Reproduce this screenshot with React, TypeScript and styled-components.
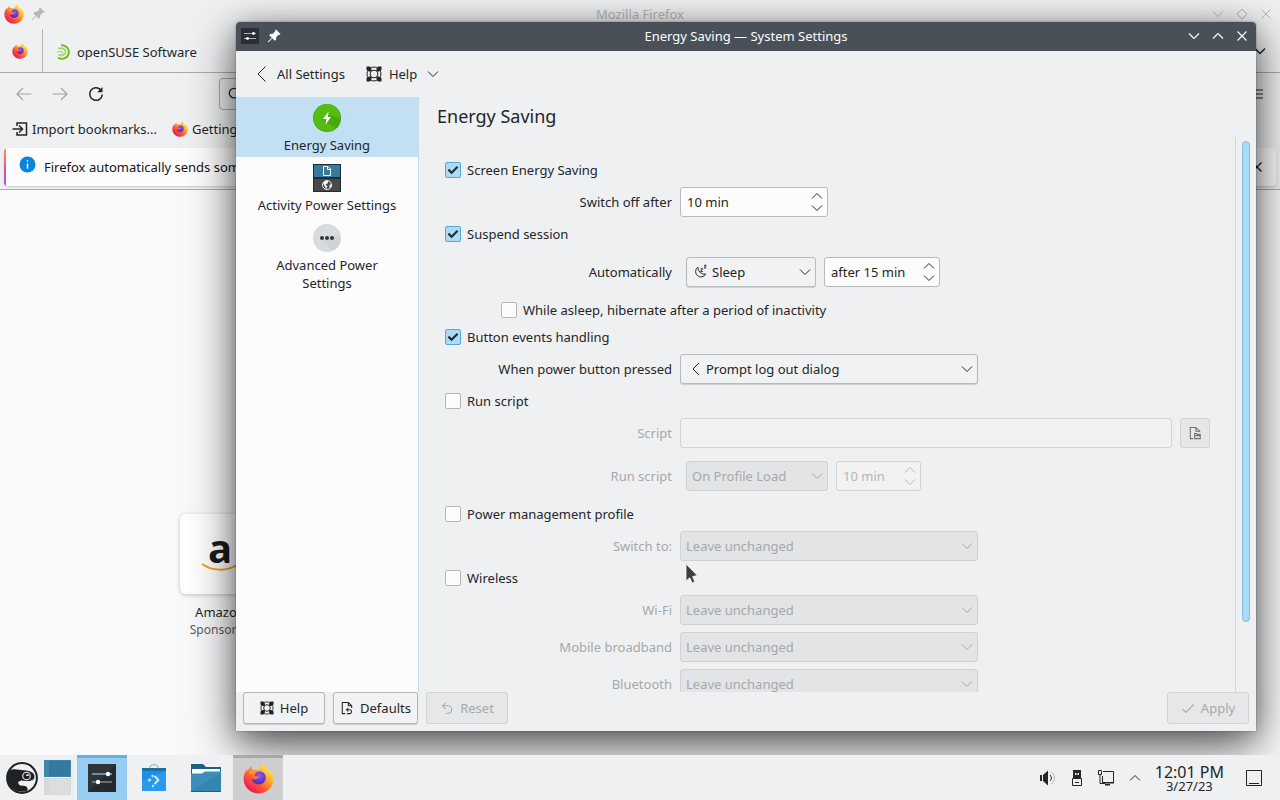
import React, { useId, useState } from "react";
import styled, { createGlobalStyle, css } from "styled-components";

const GlobalStyle = createGlobalStyle`
  *, *::before, *::after { box-sizing: border-box; }
  body {
    margin: 0;
    font-family: "Noto Sans", "Liberation Sans", sans-serif;
    font-size: 13px;
    line-height: 18px;
    color: #232629;
    background: #f9f9fb;
  }
  button, input, select { font: inherit; color: inherit; }
  button { margin: 0; padding: 0; border: 0; background: none; cursor: pointer; }
  a { color: inherit; text-decoration: none; }
  svg { display: block; flex: none; }
`;

/* ---------- icons ---------- */

type LineIconProps = { size?: number; box?: number; width?: number; children: React.ReactNode };

const LineIcon = ({ size = 16, box = 16, width = 1, children }: LineIconProps) => (
  <svg
    width={size}
    height={size}
    viewBox={`0 0 ${box} ${box}`}
    fill="none"
    stroke="currentColor"
    strokeWidth={width}
    aria-hidden="true"
  >
    {children}
  </svg>
);

const ChevronDown = ({ width = 1 }: { width?: number }) => (
  <LineIcon size={12} box={12} width={width}><path d="M1 3.5 6 8.5 11 3.5" /></LineIcon>
);
const ChevronUp = ({ width = 1 }: { width?: number }) => (
  <LineIcon size={12} box={12} width={width}><path d="M1 8.5 6 3.5 11 8.5" /></LineIcon>
);
const CloseIcon = ({ width = 1 }: { width?: number }) => (
  <LineIcon size={12} box={12} width={width}><path d="M1.5 1.5 10.5 10.5M10.5 1.5 1.5 10.5" /></LineIcon>
);
const DiamondIcon = () => (
  <LineIcon size={12} box={12}><path d="M6 1 11 6 6 11 1 6Z" /></LineIcon>
);
const ChevronLeft = () => (
  <LineIcon><path d="M11.5 .5 4 8 11.5 15.5" /></LineIcon>
);
const LogoutIcon = () => (
  <LineIcon><path d="M11 2 5 8 11 14" /></LineIcon>
);

const PinIcon = () => (
  <svg width="14" height="14" viewBox="0 0 14 14" fill="currentColor" aria-hidden="true">
    <path d="M9 .5 13.500 5 12.500 6 11.400 5.800 9.200 8.200 9 10.800 7.800 11.800 5.300 9.200 1.600 13.200 .8 12.400 4.800 8.700 2.200 6.200 3.200 5 5.800 4.800 8.200 2.600 8 1.500Z" />
  </svg>
);

const LifebuoyIcon = ({ size = 16 }: { size?: number }) => (
  <LineIcon size={size}>
    <circle cx="8" cy="8" r="7" strokeWidth="1" />
    <circle cx="8" cy="8" r="3.800" strokeWidth="1.100" />
    <path d="M.5 .5H4L5.600 2.800V5.600H2.800L.5 4ZM15.500 .5V4L13.200 5.600H10.400V2.800L12 .5ZM.5 15.500V12L2.800 10.400H5.600V13.200L4 15.500ZM15.500 15.500H12L10.400 13.200V10.400H13.200L15.500 12Z" fill="currentColor" stroke="none" />
  </LineIcon>
);

const DefaultsIcon = () => (
  <LineIcon size={14} width={1.2}>
    <path d="M6 14.400H2.600V1.600H9.500L13.400 5.500V8M9.500 1.600V5.500H13.400" />
    <path d="M7.500 10H11A2.200 2.200 0 0 1 11 14.400H8M9.500 8 7.500 10 9.500 12" />
  </LineIcon>
);

const ResetIcon = () => (
  <LineIcon size={14} width={1.2}>
    <path d="M3 5.500H9A4.400 4.400 0 0 1 9 14.300H7M6.500 2 3 5.500 6.500 9" />
  </LineIcon>
);

const ApplyIcon = () => (
  <LineIcon size={14} width={1.3}><path d="M1.500 9 5.500 13 14.500 4" /></LineIcon>
);

const OpenFileIcon = () => (
  <LineIcon size={14} width={1.2}>
    <path d="M6 14.400H2.600V1.600H9L13.400 6V7M9 1.600V6H13.400" />
    <path d="M7.600 14.400V8.600H10L11 9.600H14V14.400ZM7.600 11H14" />
  </LineIcon>
);

const SleepIcon = () => (
  <LineIcon size={14} width={1.1}>
    <path d="M4.500 3.500A6.200 6.200 0 1 0 13.500 11.500 7.500 7.500 0 0 1 4.500 3.500Z" />
    <path d="M7.500 5.500H10L7.500 8.500H10M11.500 1.500H14L11.500 4.500H14" />
  </LineIcon>
);

const TickIcon = () => (
  <svg width="16" height="16" viewBox="0 0 16 16" fill="none" stroke="#16303f" strokeWidth="2.200" aria-hidden="true">
    <path d="M3.400 7.600 6.600 10.800 12.600 4.800" />
  </svg>
);

const FirefoxLogo = ({ size }: { size: number }) => {
  const id = useId();
  return (
    <svg width={size} height={size} viewBox="0 0 32 32" aria-hidden="true">
      <defs>
        <linearGradient id={`${id}a`} x1="27" y1="4" x2="6" y2="28" gradientUnits="userSpaceOnUse">
          <stop offset="0" stopColor="#fff04a" />
          <stop offset=".35" stopColor="#ffa42e" />
          <stop offset=".65" stopColor="#ff5a35" />
          <stop offset="1" stopColor="#e8175e" />
        </linearGradient>
        <radialGradient id={`${id}b`} cx="17" cy="13" r="8" gradientUnits="userSpaceOnUse">
          <stop offset="0" stopColor="#8a5cf5" />
          <stop offset="1" stopColor="#5b2bc0" />
        </radialGradient>
      </defs>
      <path
        d="M20 .5C22.500 3 24 4.500 24.600 6.600 27 7.600 28.500 9.500 29.200 11 29 9.500 28.500 8.500 28 7.600 30.800 10.500 31.600 14 31.400 17 31 25.500 24.200 31.400 16 31.400 7.500 31.400 .6 24.800 .6 16.300 .6 12.300 2.200 9 4.400 6.500 4.400 7.300 4.500 8 4.700 8.600 5.500 6.500 7.300 4.200 9 3.200 8.800 5 9.200 6.200 10 7.200 12.500 6.600 14.500 6.600 16.500 7.600 17.600 5.200 18.200 2.500 20 .5Z"
        fill={`url(#${id}a)`}
      />
      <path
        d="M16.500 8.500C21 8.500 23.400 11.600 23.400 15.300 23.400 19.600 20 22.200 16.400 22.200 12.500 22.200 9.300 19.600 9.300 16 10.500 17.200 12 17.300 13.400 16.700 15.200 15.600 16.200 15.300 17.200 14.900 16 13.600 13.500 13.600 12.300 13.300 12.200 11 13.500 9.300 16.500 8.500Z"
        fill={`url(#${id}b)`}
      />
      <path d="M10 7.200C7.800 8 6.800 9.500 6.500 11.500 8 10.600 9.800 10.500 11.200 11.200 12.200 9.800 13.500 9 15.500 8.500 13.500 7.300 11.600 6.900 10 7.200Z" fill="#ff9433" />
    </svg>
  );
};

const OpenSuseSwirl = () => (
  <svg width="16" height="16" viewBox="0 0 16 16" fill="none" aria-hidden="true">
    <path d="M5 1.300A6.800 6.800 0 1 1 2 13.500" stroke="#73ba25" strokeWidth="2" />
    <path d="M2 4.500C6 3.500 10 5 9.500 8.500 9 11.500 5 12 2.500 10.500" stroke="#a5d56a" strokeWidth="1.600" />
    <path d="M1 8C4 7 6.500 7.500 7 9.500" stroke="#a5d56a" strokeWidth="1.200" />
  </svg>
);

const SettingsAppIcon = ({ size }: { size: number }) => (
  <svg width={size} height={size} viewBox="0 0 28 28" aria-hidden="true">
    <rect width="28" height="28" fill="#30353a" />
    <path d="M0 28 28 0V28Z" fill="#262a2e" />
    <path d="M4 10H24" stroke="#7cc4e0" strokeWidth="1.300" />
    <path d="M4 18H24" stroke="#8d959b" strokeWidth="1.300" />
    <circle cx="20" cy="10" r="2.200" fill="#fff" />
    <circle cx="10" cy="18" r="2.200" fill="#fff" />
  </svg>
);

const TitleSettingsIcon = () => (
  <svg width="18" height="16" viewBox="0 0 18 16" aria-hidden="true">
    <rect width="18" height="16" fill="#2a2f34" />
    <path d="M3 5.500H15" stroke="#5fd3c0" />
    <path d="M3 10.500H15" stroke="#c3a9d6" />
    <circle cx="12.500" cy="5.500" r="1.400" fill="#fff" />
    <circle cx="6.500" cy="10.500" r="1.400" fill="#fff" />
  </svg>
);

const EnergyIcon = () => (
  <svg width="28" height="28" viewBox="0 0 28 28" aria-hidden="true">
    <circle cx="14" cy="14" r="14" fill="#48a80c" />
    <circle cx="14" cy="13.500" r="13.500" fill="#55bd0f" />
    <path d="M10 17 24 24A14 14 0 0 0 28 14L17 11Z" fill="#46a30b" opacity=".7" />
    <path d="M15.500 7.500 10 15H13.300L12.600 20.500 18 13H14.800Z" fill="#fff" />
  </svg>
);

const ActivityIcon = () => (
  <svg width="28" height="28" viewBox="0 0 28 28" aria-hidden="true">
    <rect width="28" height="28" fill="#1d2c38" />
    <rect x="1" y="1" width="26" height="12" fill="#357b9e" />
    <rect x="1" y="15" width="26" height="12" fill="#48494d" />
    <path d="M10.500 2.500H15L17.500 5V11.500H10.500ZM14.500 2.500V5.500H17.500" fill="none" stroke="#fff" />
    <circle cx="14" cy="21" r="4.500" fill="none" stroke="#f4f4f4" />
    <path d="M10 19 12 17H15.500L14.500 19.500 12.500 20.500 14.500 22.500 13 25 12 22.500ZM16.500 21 18.500 20V22.500L16.500 24.500Z" fill="#f4f4f4" />
  </svg>
);

const MoreIcon = () => (
  <svg width="28" height="28" viewBox="0 0 28 28" aria-hidden="true">
    <circle cx="14" cy="14" r="14" fill="#d7dade" />
    <path d="M10 18 20 26.500A14 14 0 0 0 28 14L20 12Z" fill="#c9cdd1" opacity=".6" />
    <circle cx="9" cy="14" r="2" fill="#2f3439" />
    <circle cx="14" cy="14" r="2" fill="#2f3439" />
    <circle cx="19" cy="14" r="2" fill="#2f3439" />
  </svg>
);

const GeckoIcon = () => (
  <svg width="32" height="32" viewBox="0 0 32 32" aria-hidden="true">
    <circle cx="16" cy="16" r="14.900" fill="#eff0f1" stroke="#1f2225" strokeWidth="2" />
    <path d="M2.500 9C7 5.500 13 8 18 8.200 21 8.200 25 9 27.500 11.500 29 14 28.500 16.500 27 18.500 22 20 16 17.500 12.500 19.500 11.500 22.500 14 24 18 23.800 20.500 24 22 25.500 21.500 28.500 14 31.500 6 28.500 3 22 1 17.500 1 13 2.500 9Z" fill="#1f2225" />
    <circle cx="20.500" cy="14" r="4.300" fill="#eff0f1" />
    <circle cx="20.500" cy="14" r="3.200" fill="#1f2225" />
    <ellipse cx="21.500" cy="13.200" rx="1.400" ry=".9" fill="#eff0f1" />
    <path d="M15 18.800C20 20.500 24 20.300 27.500 17.500" stroke="#eff0f1" fill="none" />
  </svg>
);

const StoreIcon = () => (
  <svg width="26" height="30" viewBox="0 0 26 30" aria-hidden="true">
    <path d="M8.500 8V6A4.500 4.500 0 0 1 17.500 6V8" fill="none" stroke="#a9bfcb" strokeWidth="1.500" />
    <rect x="1" y="5" width="24" height="4" fill="#1d6f9e" />
    <path d="M1 8H25V27A1 1 0 0 1 24 28H2A1 1 0 0 1 1 27Z" fill="#1f8fe6" />
    <path d="M1 18 25 8V27A1 1 0 0 1 24 28H2Z" fill="#35a5f5" opacity=".5" />
    <path d="M13.500 13 17.500 17 13.500 21" fill="none" stroke="#d8f1ff" strokeWidth="1.800" />
    <circle cx="8.500" cy="17" r="1.600" fill="#bfe6ff" />
    <circle cx="11.500" cy="13" r="1.200" fill="#bfe6ff" />
    <circle cx="12" cy="23" r="1.200" fill="#bfe6ff" />
  </svg>
);

const FolderIcon = () => (
  <svg width="30" height="28" viewBox="0 0 30 28" aria-hidden="true">
    <path d="M0 0H12L15 3H30V14H0Z" fill="#1f5f80" />
    <rect x="1" y="5" width="28" height="8" fill="#fff" />
    <path d="M0 9.500H11L14 7.500H30V28H0Z" fill="#3c8fb8" />
    <path d="M0 28 30 9V28Z" fill="#2f7fa8" opacity=".6" />
    <rect y="27" width="30" height="1" fill="#20607f" />
  </svg>
);

const VolumeIcon = () => (
  <svg width="18" height="18" viewBox="0 0 18 18" aria-hidden="true">
    <path d="M1 6H3V12H1ZM4 6 9 1.500V16.500L4 12Z" fill="#232629" />
    <path d="M11 6A4 4 0 0 1 11 12" fill="none" stroke="#232629" />
    <path d="M12.500 3A7.500 7.500 0 0 1 12.500 15" fill="none" stroke="#b3b6b9" />
  </svg>
);

const UsbIcon = () => (
  <svg width="12" height="18" viewBox="0 0 12 18" aria-hidden="true">
    <path d="M2 1H10V9H2Z" fill="#232629" />
    <path d="M4 4H5.500V6H4ZM6.500 4H8V6H6.500Z" fill="#eff0f1" />
    <path d="M1.500 9.500H10.500V16.500H1.500ZM4 13.500H8" fill="none" stroke="#232629" />
  </svg>
);

const NetworkIcon = () => (
  <svg width="18" height="18" viewBox="0 0 18 18" fill="none" stroke="#232629" aria-hidden="true">
    <path d="M6 2.500H16.500V13.500H5.500V7M1.500 1.500H4.500V5.500H1.500ZM3 5.500V14.500H8" />
    <path d="M5 13H17V14.500H5ZM8 15H13V16.500H8Z" fill="#232629" stroke="none" />
  </svg>
);

const ShowDesktopIcon = () => (
  <svg width="18" height="18" viewBox="0 0 18 18" fill="none" stroke="#232629" aria-hidden="true">
    <path d="M1.500 1.500H16.500V16.500H1.500ZM4 14.500H14" />
  </svg>
);

const PointerIcon = () => (
  <svg width="14" height="22" viewBox="0 0 14 22" aria-hidden="true">
    <path d="M1 1V18L4.800 14.800 7.200 20 9.800 18.700 7.600 13.600 12.300 12.500Z" fill="#3b3e42" stroke="#fafafa" strokeWidth=".8" />
  </svg>
);

/* ---------- desktop ---------- */

const Desktop = styled.div`
  display: flex;
  flex-direction: column;
  height: 100vh;
  min-height: 480px;
  overflow: hidden;
`;

const Workspace = styled.div`
  position: relative;
  flex: 1;
  min-height: 0;
  display: flex;
  overflow: hidden;
`;

const TitleBar = styled.header<{ $active?: boolean }>`
  display: grid;
  grid-template-columns: 1fr auto 1fr;
  align-items: center;
  flex: none;
  height: 29px;
  padding: 0 2px 2px;
  color: ${(p) => (p.$active ? "#fcfcfc" : "#b4b6b9")};
  background: ${(p) => (p.$active ? "#495057" : "transparent")};
`;

const TitleGroup = styled.div<{ $end?: boolean }>`
  display: flex;
  justify-content: ${(p) => (p.$end ? "flex-end" : "flex-start")};
`;

const TitleButton = styled.button`
  display: grid;
  place-items: center;
  width: 24px;
  height: 24px;
`;

/* ---------- Firefox ---------- */

const Browser = styled.section`
  flex: 1;
  display: flex;
  flex-direction: column;
  min-width: 0;
  background: #eff0f1;
`;

const TabStrip = styled.div`
  display: flex;
  align-items: stretch;
  height: 44px;
  padding-right: 8px;
  border-bottom: 1px solid #a9abad;
`;

const PinnedTab = styled.button`
  display: grid;
  place-items: center;
  width: 43px;
  padding-right: 2px;
  border-right: 1px solid #b5b7b9;
`;

const Tab = styled.button`
  display: flex;
  align-items: center;
  gap: 5px;
  padding: 2px 13px 0;
`;

const StripMenu = styled.button`
  display: grid;
  place-items: center;
  width: 24px;
  margin-left: auto;
`;

const NavBar = styled.div`
  display: flex;
  align-items: center;
  height: 42px;
  padding: 0 4px 0 6px;
`;

const NavButton = styled.button<{ $dim?: boolean }>`
  display: grid;
  place-items: center;
  width: 36px;
  height: 36px;
  color: ${(p) => (p.$dim ? "#a0a2a4" : "#232629")};
`;

const UrlBox = styled.label`
  display: flex;
  align-items: center;
  gap: 8px;
  flex: 1;
  height: 32px;
  margin: 0 190px 0 105px;
  padding: 0 8px;
  border: 1px solid #a9abad;
  border-radius: 4px;
`;

const UrlInput = styled.input`
  flex: 1;
  min-width: 0;
  border: 0;
  outline: 0;
  background: none;
`;

const Bookmarks = styled.nav`
  display: flex;
  align-items: center;
  gap: 15px;
  height: 31px;
  padding: 0 12px 3px;
`;

const Bookmark = styled.a`
  display: flex;
  align-items: center;
  gap: 4px;
  white-space: nowrap;
`;

const NoticeArea = styled.div`
  padding: 2px 4px 3px;
  border-bottom: 1px solid #a9abad;
`;

const Notice = styled.div`
  display: flex;
  align-items: center;
  gap: 8px;
  height: 38px;
  padding: 0 13px 0 15px;
  color: #15141a;
  background: linear-gradient(#ff9a4a, #f0508c 50%, #9059ff) left / 2px 100% no-repeat, #fcfcfc;
  border-radius: 4px;
  box-shadow: 0 1px 2px rgba(0, 0, 0, 0.15);
`;

const NoticeIcon = styled.span`
  align-self: flex-start;
  padding-top: 8px;
`;

const NoticeClose = styled.button`
  margin-left: auto;
`;

const NewTabPage = styled.main`
  flex: 1;
  display: flex;
  justify-content: center;
  padding-top: 324px;
  background: #f9f9fb;
`;

const TopSites = styled.div`
  width: 920px;
  display: flex;
`;

const TopSite = styled.a`
  display: flex;
  flex-direction: column;
  align-items: center;
  width: 80px;
  text-align: center;
`;

const SiteTile = styled.span`
  display: grid;
  place-items: center;
  width: 80px;
  height: 80px;
  margin-bottom: 9px;
  border-radius: 6px;
  background: #fff;
  box-shadow: 0 1px 4px rgba(0, 0, 0, 0.22);
`;

const AmazonMark = styled.span`
  display: flex;
  flex-direction: column;
  align-items: center;
  color: #1b1b1b;
  font: bold 40px/30px "Open Sans", "Noto Sans", sans-serif;
`;

const SiteNote = styled.span`
  font-size: 12px;
  color: #5b5b66;
`;

const Amazon = () => (
  <AmazonMark>
    a
    <svg width="38" height="12" viewBox="0 0 38 12" aria-hidden="true">
      <path d="M1 1C11 8 25 8.500 35 2.500" fill="none" stroke="#f0a020" strokeWidth="2" />
    </svg>
  </AmazonMark>
);

const BrowserWindow = () => (
  <Browser>
    <TitleBar>
      <TitleGroup>
        <TitleButton aria-label="Window menu"><FirefoxLogo size={20} /></TitleButton>
        <TitleButton aria-label="Keep on all desktops"><PinIcon /></TitleButton>
      </TitleGroup>
      <span>Mozilla Firefox</span>
      <TitleGroup $end>
        <TitleButton aria-label="Minimize"><ChevronDown /></TitleButton>
        <TitleButton aria-label="Restore"><DiamondIcon /></TitleButton>
        <TitleButton aria-label="Close"><CloseIcon /></TitleButton>
      </TitleGroup>
    </TitleBar>
    <TabStrip>
      <PinnedTab aria-label="Firefox View"><FirefoxLogo size={16} /></PinnedTab>
      <Tab><OpenSuseSwirl />openSUSE Software</Tab>
      <StripMenu aria-label="List all tabs"><ChevronDown width={1.5} /></StripMenu>
    </TabStrip>
    <NavBar>
      <NavButton $dim aria-label="Back">
        <LineIcon width={1.2}><path d="M15.500 8H1M7 2 1 8 7 14" /></LineIcon>
      </NavButton>
      <NavButton $dim aria-label="Forward">
        <LineIcon width={1.2}><path d="M.5 8H15M9 2 15 8 9 14" /></LineIcon>
      </NavButton>
      <NavButton aria-label="Reload">
        <LineIcon width={1.5}>
          <path d="M14.300 8.500A6.300 6.300 0 1 1 12.500 3.600" />
          <path d="M14.500 1V6.300H9.200Z" fill="currentColor" stroke="none" />
        </LineIcon>
      </NavButton>
      <UrlBox>
        <LineIcon size={14} width={1.5}><circle cx="7" cy="7" r="5.500" /><path d="M11 11 15 15" /></LineIcon>
        <UrlInput aria-label="Address" />
      </UrlBox>
      <NavButton aria-label="Open menu">
        <LineIcon size={10} box={10} width={1.2}><path d="M0 1H10M0 5H10M0 9H10" /></LineIcon>
      </NavButton>
    </NavBar>
    <Bookmarks>
      <Bookmark href="#import">
        <LineIcon width={1.5}><path d="M5 5V2H14.500V14H5V11M.5 8H10M7 4.500 10.500 8 7 11.500" /></LineIcon>
        Import bookmarks...
      </Bookmark>
      <Bookmark href="#start"><FirefoxLogo size={16} />Getting Started</Bookmark>
    </Bookmarks>
    <NoticeArea>
      <Notice>
        <NoticeIcon>
          <svg width="17" height="17" viewBox="0 0 16 16" aria-hidden="true">
            <circle cx="8" cy="8" r="7.500" fill="#0a84dd" />
            <path d="M8 7V12M8 4V5.500" stroke="#fff" strokeWidth="1.300" />
          </svg>
        </NoticeIcon>
        Firefox automatically sends some data
        <NoticeClose aria-label="Dismiss"><CloseIcon width={1.2} /></NoticeClose>
      </Notice>
    </NoticeArea>
    <NewTabPage>
      <TopSites>
        <TopSite href="#amazon">
          <SiteTile><Amazon /></SiteTile>
          Amazon
          <SiteNote>Sponsored</SiteNote>
        </TopSite>
      </TopSites>
    </NewTabPage>
  </Browser>
);

/* ---------- System Settings ---------- */

const SettingsFrame = styled.section`
  position: absolute;
  inset: 22px 24px 24px 236px;
  display: flex;
  flex-direction: column;
  overflow: hidden;
  border-radius: 4px 4px 0 0;
  background: #eff0f1;
`;

const SettingsShadow = styled.div`
  position: absolute;
  inset: 22px 24px 24px 236px;
  border-radius: 4px 4px 0 0;
  box-shadow: 0 16px 48px rgba(0, 0, 0, 0.6), 0 4px 24px rgba(0, 0, 0, 0.25), 0 0 2px rgba(0, 0, 0, 0.4);
`;

const Toolbar = styled.div`
  display: flex;
  align-items: center;
  gap: 21px;
  flex: none;
  height: 46px;
  padding: 0 18px;
`;

const ToolButton = styled.button`
  display: flex;
  align-items: center;
  gap: 7px;

  svg + span + svg { margin-left: 3px; }
`;

const Panes = styled.div`
  flex: 1;
  min-height: 0;
  display: flex;
`;

const Sidebar = styled.nav`
  flex: none;
  width: 183px;
  border-right: 1px solid #c5dbe8;
  background: #fcfcfc;
`;

const SideItem = styled.a<{ $current?: boolean }>`
  display: flex;
  flex-direction: column;
  align-items: center;
  gap: 4px;
  padding: 7px 30px 3px;
  text-align: center;
  background: ${(p) => (p.$current ? "#c2dff4" : "transparent")};

  span { margin: 0 -16px; }
`;

const Pane = styled.div`
  flex: 1;
  min-width: 0;
  display: flex;
  flex-direction: column;
`;

const PaneTitle = styled.h1`
  flex: none;
  height: 40px;
  margin: 0;
  padding-left: 18px;
  font-size: 18px;
  font-weight: 400;
  line-height: 38px;
`;

const ScrollArea = styled.div`
  flex: 1;
  min-height: 0;
  display: flex;
`;

const Form = styled.form`
  flex: 1;
  min-width: 0;
  display: grid;
  grid-template-columns: 227px 1fr;
  align-content: start;
  gap: 7px 8px;
  padding: 23px 25px 0 26px;
  overflow: hidden;
`;

const ScrollRail = styled.div`
  flex: none;
  width: 21px;
  padding: 4px 6px;
  border-left: 1px solid #d3d5d7;
`;

const ScrollThumb = styled.div`
  height: 88%;
  border: 1px solid #7fbfdf;
  border-radius: 4px;
  background: #a9daf6;
`;

const CheckRow = styled.div<{ $indent?: boolean }>`
  grid-column: 1 / -1;
  display: flex;
  align-items: center;
  gap: 6px;
  height: 20px;
  padding-left: ${(p) => (p.$indent ? "56px" : "0")};
`;

const CheckHolder = styled.span`
  position: relative;
  width: 16px;
  height: 16px;

  svg { position: absolute; inset: 0; pointer-events: none; }
`;

const CheckInput = styled.input`
  appearance: none;
  display: block;
  width: 16px;
  height: 16px;
  margin: 0;
  border: 1px solid #b3b5b8;
  border-radius: 2px;
  background: #fcfcfc;

  &:checked { border-color: #55a9d6; background: #b0d9f3; }
`;

const FieldLabel = styled.label<{ $off?: boolean }>`
  align-self: center;
  text-align: right;
  color: ${(p) => (p.$off ? "#a6a8ab" : "inherit")};
`;

const FieldRow = styled.div<{ $inset?: boolean }>`
  display: flex;
  gap: 8px;
  padding: ${(p) => (p.$inset ? "6px" : "0")};
`;

const fieldBox = css`
  height: 30px;
  border: 1px solid #b7b9bc;
  border-radius: 3px;
`;

const SelectHolder = styled.span<{ $width: number; $off?: boolean }>`
  position: relative;
  width: ${(p) => p.$width}px;
  color: ${(p) => (p.$off ? "#a6a8ab" : "#232629")};

  svg { position: absolute; pointer-events: none; }
  svg:last-child { right: 5px; top: 9px; }
  svg:first-child { left: 8px; top: 7px; }
`;

const SelectInput = styled.select<{ $icon?: boolean }>`
  ${fieldBox}
  appearance: none;
  display: block;
  width: 100%;
  padding: 0 22px 0 ${(p) => (p.$icon ? "25px" : "5px")};
  background: #f1f2f3;
  box-shadow: 0 1px 1px rgba(0, 0, 0, 0.14);

  &:disabled {
    border-color: #cfd1d3;
    background: #e3e4e6;
    box-shadow: none;
    opacity: 1;
    color: inherit;
  }
`;

const SpinBox = styled.span<{ $width: number; $off?: boolean }>`
  ${fieldBox}
  display: flex;
  width: ${(p) => p.$width}px;
  padding-right: 4px;
  color: ${(p) => (p.$off ? "#b4b6b8" : "#232629")};
  border-color: ${(p) => (p.$off ? "#d2d4d6" : "#b7b9bc")};
  background: ${(p) => (p.$off ? "#f2f2f2" : "#fcfcfc")};
`;

const SpinInput = styled.input`
  flex: 1;
  min-width: 0;
  padding: 0 0 0 6px;
  border: 0;
  outline: 0;
  background: none;
`;

const SpinArrows = styled.span`
  display: flex;
  flex-direction: column;
  justify-content: center;
`;

const PathInput = styled.input`
  ${fieldBox}
  flex: 1;
  min-width: 0;
  padding: 0 6px;
  border-color: #d2d4d6;
  background: #f1f1f1;
`;

const PushButton = styled.button<{ $width?: number }>`
  display: flex;
  align-items: center;
  justify-content: center;
  gap: 6px;
  width: ${(p) => p.$width ?? 82}px;
  height: 32px;
  border: 1px solid #b3b5b8;
  border-radius: 3px;
  background: #f1f2f3;
  box-shadow: 0 1px 1px rgba(0, 0, 0, 0.14);

  &:disabled {
    color: #a6a8ab;
    border-color: #d0d2d4;
    background: #e6e7e9;
    box-shadow: none;
  }
`;

const BrowseButton = styled(PushButton)`
  height: 30px;

  &:disabled { color: #6d7074; }
`;

const Footer = styled.footer`
  display: flex;
  flex: none;
  gap: 8px;
  height: 39px;
  padding: 0 7px;

  > :last-child { margin-left: auto; }
`;

const Pointer = styled.div`
  position: absolute;
  left: 685px;
  top: 563px;
  pointer-events: none;
`;

type CheckProps = { label: string; on?: boolean; indent?: boolean };

const Check = ({ label, on = false, indent }: CheckProps) => {
  const id = useId();
  const [checked, setChecked] = useState(on);
  return (
    <CheckRow $indent={indent}>
      <CheckHolder>
        <CheckInput id={id} type="checkbox" checked={checked} onChange={() => setChecked(!checked)} />
        {checked && <TickIcon />}
      </CheckHolder>
      <label htmlFor={id}>{label}</label>
    </CheckRow>
  );
};

type SelectProps = { id: string; value: string; width: number; icon?: React.ReactNode; disabled?: boolean };

const Select = ({ id, value, width, icon, disabled }: SelectProps) => (
  <SelectHolder $width={width} $off={disabled}>
    {icon}
    <SelectInput id={id} $icon={Boolean(icon)} disabled={disabled}>
      <option>{value}</option>
    </SelectInput>
    <ChevronDown />
  </SelectHolder>
);

type SpinProps = { id?: string; value: string; width: number; name: string; disabled?: boolean };

const Spin = ({ id, value, width, name, disabled }: SpinProps) => (
  <SpinBox $width={width} $off={disabled}>
    <SpinInput id={id} aria-label={id ? undefined : name} defaultValue={value} disabled={disabled} />
    <SpinArrows>
      <button type="button" aria-label={`Increase ${name}`} disabled={disabled}><ChevronUp /></button>
      <button type="button" aria-label={`Decrease ${name}`} disabled={disabled}><ChevronDown /></button>
    </SpinArrows>
  </SpinBox>
);

const UnchangedField = ({ id, label }: { id: string; label: string }) => (
  <>
    <FieldLabel htmlFor={id} $off>{label}</FieldLabel>
    <FieldRow><Select id={id} value="Leave unchanged" width={298} disabled /></FieldRow>
  </>
);

const EnergyForm = () => (
  <Form>
    <Check label="Screen Energy Saving" on />
    <FieldLabel htmlFor="off-after">Switch off after</FieldLabel>
    <FieldRow><Spin id="off-after" name="switch off delay" value="10 min" width={148} /></FieldRow>
    <Check label="Suspend session" on />
    <FieldLabel htmlFor="auto">Automatically</FieldLabel>
    <FieldRow $inset>
      <Select id="auto" value="Sleep" width={130} icon={<SleepIcon />} />
      <Spin name="sleep delay" value="after 15 min" width={116} />
    </FieldRow>
    <Check label="While asleep, hibernate after a period of inactivity" indent />
    <Check label="Button events handling" on />
    <FieldLabel htmlFor="power">When power button pressed</FieldLabel>
    <FieldRow><Select id="power" value="Prompt log out dialog" width={298} icon={<LogoutIcon />} /></FieldRow>
    <Check label="Run script" />
    <FieldLabel htmlFor="script" $off>Script</FieldLabel>
    <FieldRow>
      <PathInput id="script" disabled />
      <BrowseButton type="button" $width={30} disabled aria-label="Choose script"><OpenFileIcon /></BrowseButton>
    </FieldRow>
    <FieldLabel htmlFor="run" $off>Run script</FieldLabel>
    <FieldRow $inset>
      <Select id="run" value="On Profile Load" width={142} disabled />
      <Spin name="script delay" value="10 min" width={85} disabled />
    </FieldRow>
    <Check label="Power management profile" />
    <UnchangedField id="profile" label="Switch to:" />
    <Check label="Wireless" />
    <UnchangedField id="wifi" label="Wi-Fi" />
    <UnchangedField id="mobile" label="Mobile broadband" />
    <UnchangedField id="bluetooth" label="Bluetooth" />
  </Form>
);

const SettingsWindow = () => (
  <SettingsFrame>
    <TitleBar $active>
      <TitleGroup>
        <TitleButton aria-label="Window menu"><TitleSettingsIcon /></TitleButton>
        <TitleButton aria-label="Keep on all desktops"><PinIcon /></TitleButton>
      </TitleGroup>
      <span>Energy Saving — System Settings</span>
      <TitleGroup $end>
        <TitleButton aria-label="Minimize"><ChevronDown width={1.2} /></TitleButton>
        <TitleButton aria-label="Maximize"><ChevronUp width={1.2} /></TitleButton>
        <TitleButton aria-label="Close"><CloseIcon width={1.2} /></TitleButton>
      </TitleGroup>
    </TitleBar>
    <Toolbar>
      <ToolButton><ChevronLeft /><span>All Settings</span></ToolButton>
      <ToolButton><LifebuoyIcon /><span>Help</span><ChevronDown /></ToolButton>
    </Toolbar>
    <Panes>
      <Sidebar>
        <SideItem href="#energy" $current><EnergyIcon /><span>Energy Saving</span></SideItem>
        <SideItem href="#activity"><ActivityIcon /><span>Activity Power Settings</span></SideItem>
        <SideItem href="#advanced"><MoreIcon />Advanced Power Settings</SideItem>
      </Sidebar>
      <Pane>
        <PaneTitle>Energy Saving</PaneTitle>
        <ScrollArea>
          <EnergyForm />
          <ScrollRail><ScrollThumb /></ScrollRail>
        </ScrollArea>
      </Pane>
    </Panes>
    <Footer>
      <PushButton><LifebuoyIcon size={14} />Help</PushButton>
      <PushButton $width={85}><DefaultsIcon />Defaults</PushButton>
      <PushButton disabled><ResetIcon />Reset</PushButton>
      <PushButton disabled><ApplyIcon />Apply</PushButton>
    </Footer>
  </SettingsFrame>
);

/* ---------- task bar ---------- */

const Panel = styled.footer`
  display: flex;
  align-items: stretch;
  flex: none;
  height: 45px;
  padding: 0 17px 0 6px;
  background: #eff0f1;
`;

const Launcher = styled.button`
  display: grid;
  place-items: center;
  width: 32px;
  margin-right: 6px;
`;

const Pager = styled.div`
  display: grid;
  grid-template-rows: 17px 17px;
  align-content: center;
  gap: 1px;
  width: 27px;
  margin-right: 6px;
`;

const PagerCell = styled.button<{ $current?: boolean }>`
  border: 1px solid ${(p) => (p.$current ? "#3d87ab" : "#d6d7d9")};
  border-left-width: 5px;
  background: ${(p) => (p.$current ? "#357a9e" : "#dcdddf")};
`;

const taskTone = {
  none: css``,
  active: css`background: #97cdf0; box-shadow: inset 0 3px #62b1df;`,
  open: css`background: #cdcecf; box-shadow: inset 0 3px #a7a9ab;`,
};

const Task = styled.button<{ $tone?: keyof typeof taskTone }>`
  display: grid;
  place-items: center;
  width: 50px;
  padding-top: 1px;
  margin-right: 2px;
  ${(p) => taskTone[p.$tone ?? "none"]}
`;

const Tray = styled.div`
  display: flex;
  align-items: center;
  gap: 14px;
  margin-left: auto;
`;

const Clock = styled.time`
  display: flex;
  flex-direction: column;
  align-items: center;
  font-size: 13px;
  line-height: 12px;

  strong { font-size: 16px; font-weight: 400; line-height: 16px; }
`;

const DesktopButton = styled.button`
  margin-left: 7px;
`;

const TaskPanel = () => (
  <Panel>
    <Launcher aria-label="Application launcher"><GeckoIcon /></Launcher>
    <Pager>
      <PagerCell $current aria-label="Desktop one" />
      <PagerCell aria-label="Desktop two" />
    </Pager>
    <Task $tone="active" aria-label="System Settings"><SettingsAppIcon size={28} /></Task>
    <Task aria-label="Discover"><StoreIcon /></Task>
    <Task aria-label="Files"><FolderIcon /></Task>
    <Task $tone="open" aria-label="Firefox"><FirefoxLogo size={31} /></Task>
    <Tray>
      <button aria-label="Volume"><VolumeIcon /></button>
      <button aria-label="Removable devices"><UsbIcon /></button>
      <button aria-label="Network"><NetworkIcon /></button>
      <button aria-label="Show hidden icons"><ChevronUp /></button>
      <Clock><strong>12:01 PM</strong>3/27/23</Clock>
      <DesktopButton aria-label="Show desktop"><ShowDesktopIcon /></DesktopButton>
    </Tray>
  </Panel>
);

export default function App() {
  return (
    <Desktop>
      <GlobalStyle />
      <Workspace>
        <BrowserWindow />
        <SettingsShadow />
        <SettingsWindow />
        <Pointer><PointerIcon /></Pointer>
      </Workspace>
      <TaskPanel />
    </Desktop>
  );
}
